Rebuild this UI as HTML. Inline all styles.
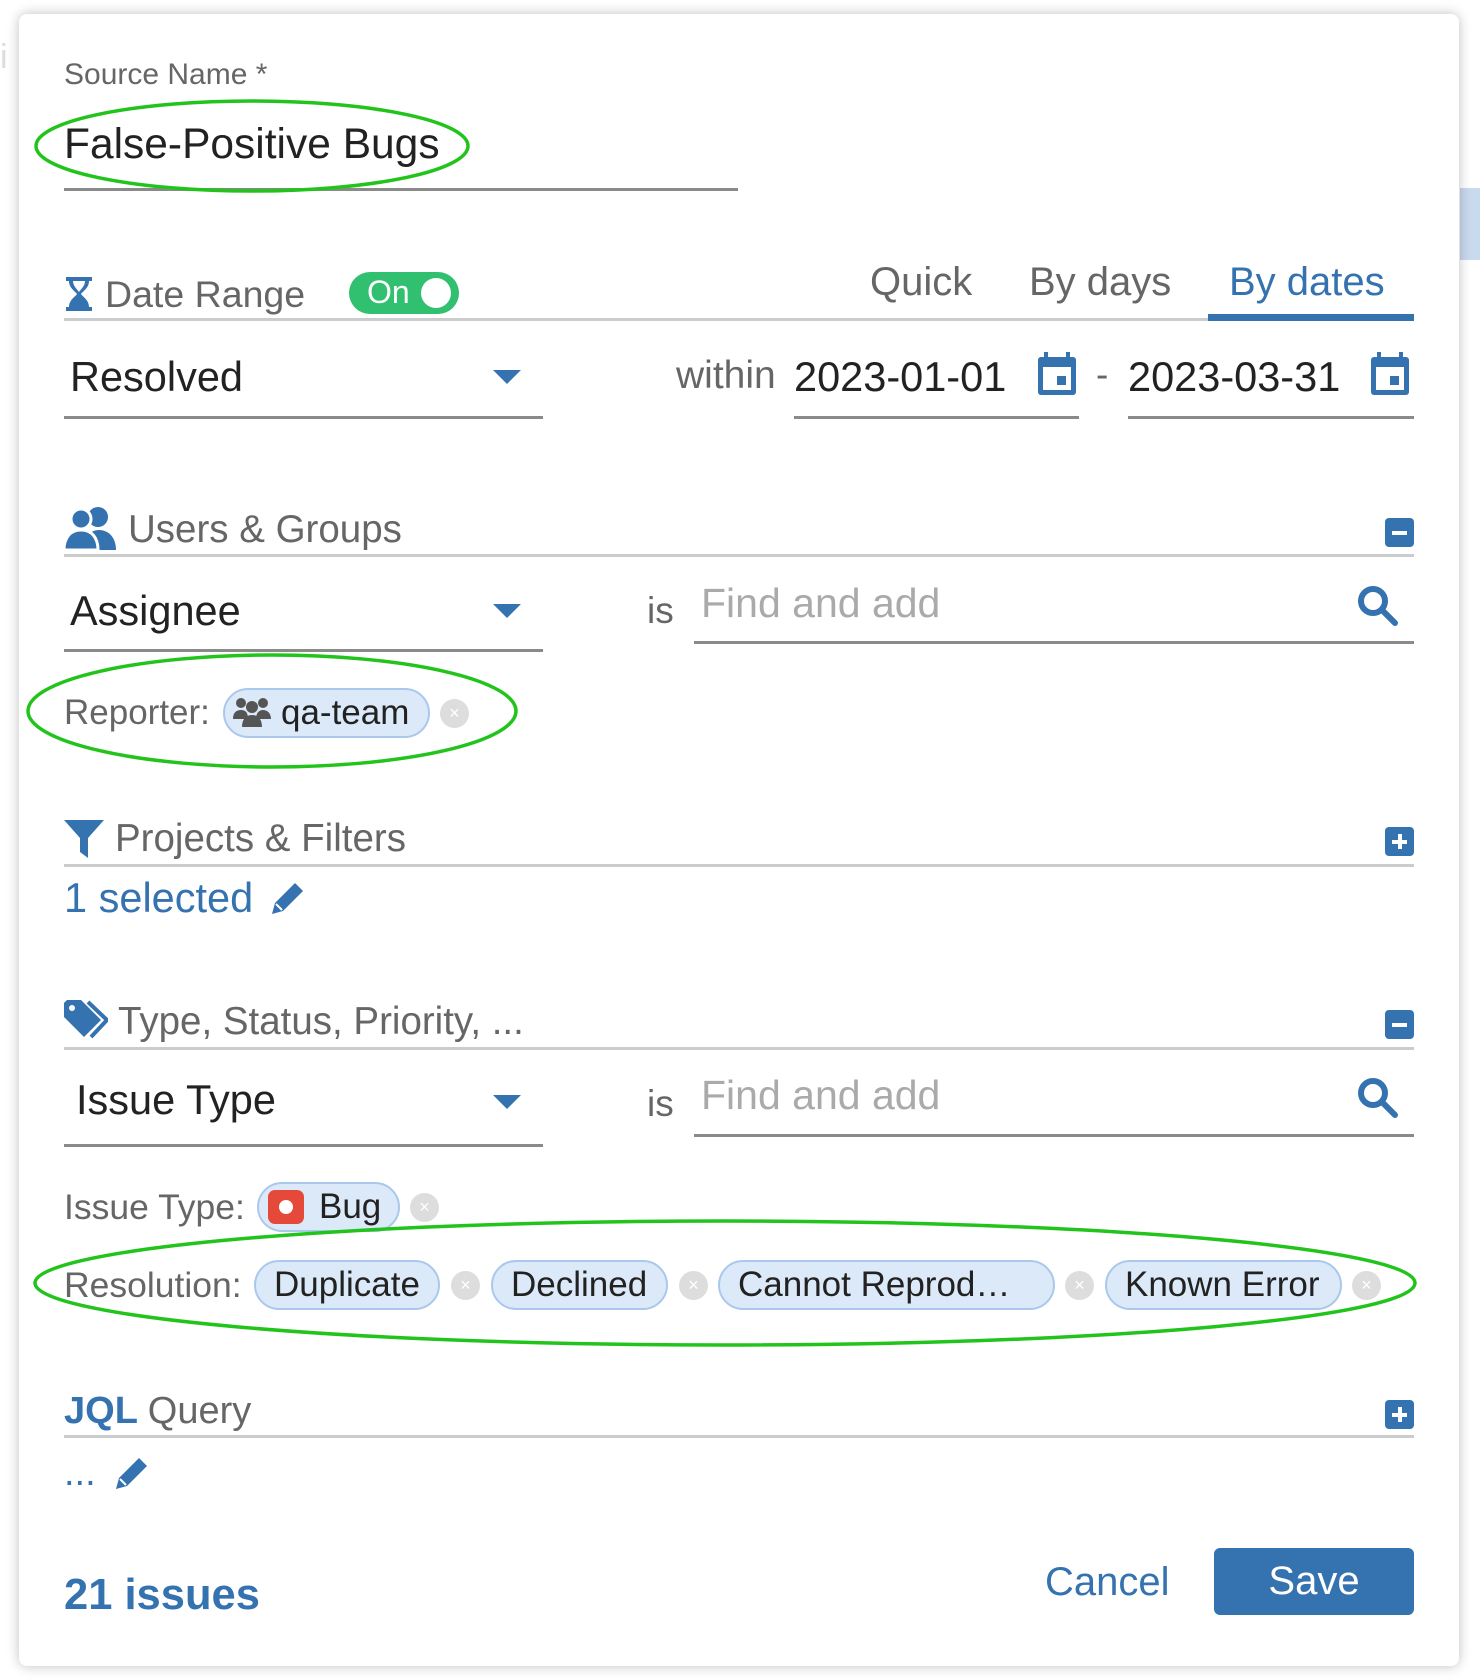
<!DOCTYPE html>
<html><head><meta charset="utf-8"><style>
*{margin:0;padding:0;box-sizing:border-box}
body{width:1480px;height:1680px;background:#fff;position:relative;overflow:hidden;font-family:"Liberation Sans",Arial,sans-serif;}
.dlg{position:absolute;left:19px;top:14px;width:1440px;height:1652px;background:#fff;border-radius:8px;box-shadow:0 0 12px rgba(0,0,0,.25)}
.a{position:absolute;white-space:nowrap;line-height:1}
.lbl{color:#666}
.blue{color:#3572b0}
.hl{position:absolute;height:3px;background:#ccc}
.ul{position:absolute;height:3px;background:#8a8a8a}
.btn{position:absolute;width:29px;height:29px;background:#3572b0;border-radius:4px}
.btn:before{content:"";position:absolute;left:7px;top:13px;width:15px;height:4px;background:#fff}
.plus:after{content:"";position:absolute;left:13px;top:7px;width:4px;height:15px;background:#fff}
.chip{position:absolute;height:50px;border:2px solid #a9c8ec;background:#dce9f8;border-radius:25px;font-size:35px;color:#222;line-height:46px;padding:0 18px;white-space:nowrap;overflow:hidden}
.x{position:absolute;width:29px;height:29px;border-radius:50%;background:#ddd;color:#fff;font-size:18px;text-align:center;line-height:29px}
.caret{position:absolute;width:0;height:0;border-left:14px solid transparent;border-right:14px solid transparent;border-top:14px solid #3572b0}
</style></head><body>
<div class="a" style="left:0;top:40px;font-size:34px;color:#ddd">i</div>
<div style="position:absolute;left:1460px;top:188px;width:20px;height:72px;background:#c9d9ee"></div>
<div class="dlg"></div>

<div class="a lbl" style="left:64px;top:60px;font-size:30px">Source Name *</div>
<div class="a" style="left:64px;top:124px;font-size:42.5px;color:#222">False-Positive Bugs</div>
<div class="ul" style="left:64px;top:188px;width:674px"></div>

<svg class="a" style="left:64px;top:275px" width="30" height="38" viewBox="0 0 30 38"><path d="M2 2h26v4h-3c0 7-6 10-8 13 2 3 8 6 8 13h3v4H2v-4h3c0-7 6-10 8-13-2-3-8-6-8-13H2z" fill="#3572b0"/><path d="M9 6h12c0 5-4 8-6 11-2-3-6-6-6-11z" fill="#fff"/></svg>
<div class="a lbl" style="left:105px;top:276px;font-size:37.5px">Date Range</div>
<div style="position:absolute;left:349px;top:272px;width:110px;height:42px;border-radius:21px;background:#30c06f"></div>
<div class="a" style="left:367px;top:276px;font-size:32px;color:#fff">On</div>
<div style="position:absolute;left:421px;top:278px;width:30px;height:30px;border-radius:50%;background:#fff"></div>
<div class="a lbl" style="left:870px;top:262px;font-size:40px">Quick</div>
<div class="a lbl" style="left:1029px;top:262px;font-size:40px">By days</div>
<div class="a blue" style="left:1229px;top:262px;font-size:40px">By dates</div>
<div class="hl" style="left:64px;top:318px;width:1350px"></div>
<div style="position:absolute;left:1208px;top:314px;width:206px;height:7px;background:#3572b0"></div>

<div class="a" style="left:70px;top:356px;font-size:41.5px;color:#222">Resolved</div>
<div class="caret" style="left:493px;top:370px"></div>
<div class="ul" style="left:64px;top:416px;width:479px"></div>
<div class="a lbl" style="left:676px;top:356px;font-size:39px">within</div>
<div class="a" style="left:794px;top:356px;font-size:41.5px;color:#222">2023-01-01</div>
<svg class="a" style="left:1036px;top:351px" width="42" height="46" viewBox="0 0 42 46"><rect x="2" y="6" width="38" height="38" rx="3" fill="#3572b0"/><rect x="7" y="16" width="28" height="23" fill="#fff"/><rect x="21" y="25" width="9" height="9" fill="#3572b0"/><rect x="8" y="1" width="4" height="8" fill="#3572b0"/><rect x="30" y="1" width="4" height="8" fill="#3572b0"/></svg>
<div class="ul" style="left:794px;top:416px;width:285px"></div>
<div class="a lbl" style="left:1096px;top:356px;font-size:37px">-</div>
<div class="a" style="left:1128px;top:356px;font-size:41.5px;color:#222">2023-03-31</div>
<svg class="a" style="left:1369px;top:351px" width="42" height="46" viewBox="0 0 42 46"><rect x="2" y="6" width="38" height="38" rx="3" fill="#3572b0"/><rect x="7" y="16" width="28" height="23" fill="#fff"/><rect x="21" y="25" width="9" height="9" fill="#3572b0"/><rect x="8" y="1" width="4" height="8" fill="#3572b0"/><rect x="30" y="1" width="4" height="8" fill="#3572b0"/></svg>
<div class="ul" style="left:1128px;top:416px;width:286px"></div>

<svg class="a" style="left:64px;top:506px" width="54" height="44" viewBox="0 0 54 44"><circle cx="34" cy="11" r="10" fill="#3572b0"/><path d="M20 44c0-12 5-20 15-20s17 8 17 20z" fill="#3572b0"/><circle cx="17" cy="13" r="10" fill="#3572b0" stroke="#fff" stroke-width="3"/><path d="M0 44c0-12 6-20 17-20s17 8 17 20z" fill="#3572b0" stroke="#fff" stroke-width="3"/></svg>
<div class="a lbl" style="left:128px;top:511px;font-size:38.5px">Users &amp; Groups</div>
<div class="hl" style="left:64px;top:554px;width:1350px"></div>
<div class="btn" style="left:1385px;top:518px"></div>

<div class="a" style="left:70px;top:590px;font-size:41.5px;color:#222">Assignee</div>
<div class="caret" style="left:493px;top:604px"></div>
<div class="ul" style="left:64px;top:649px;width:479px"></div>
<div class="a lbl" style="left:647px;top:592px;font-size:37px">is</div>
<div class="a" style="left:701px;top:583px;font-size:41px;color:#aaa">Find and add</div>
<svg class="a" style="left:1356px;top:584px" width="44" height="44" viewBox="0 0 44 44"><circle cx="17" cy="17" r="12" fill="none" stroke="#3572b0" stroke-width="6"/><path d="M26 26l13 13" stroke="#3572b0" stroke-width="6" stroke-linecap="round"/></svg>
<div class="ul" style="left:694px;top:641px;width:720px"></div>

<div class="a lbl" style="left:64px;top:695px;font-size:35px">Reporter:</div>
<div class="chip" style="left:223px;top:688px;width:207px;padding-left:56px;padding-right:4px">qa-team</div>
<svg class="a" style="left:233px;top:697px" width="38" height="30" viewBox="0 0 38 30"><circle cx="8" cy="6" r="5" fill="#555"/><circle cx="30" cy="6" r="5" fill="#555"/><circle cx="19" cy="10" r="6" fill="#555"/><path d="M0 22c0-6 3-9 8-9s7 3 7 9zM23 22c0-6 3-9 7-9s8 3 8 9zM9 30c0-8 4-12 10-12s10 4 10 12z" fill="#555"/></svg>
<div class="x" style="left:440px;top:699px">×</div>

<svg class="a" style="left:64px;top:820px" width="40" height="38" viewBox="0 0 40 38"><path d="M0 0h40L24 18v20l-8-6V18z" fill="#3572b0"/></svg>
<div class="a lbl" style="left:115px;top:820px;font-size:38.5px">Projects &amp; Filters</div>
<div class="hl" style="left:64px;top:864px;width:1350px"></div>
<div class="btn plus" style="left:1385px;top:827px"></div>
<div class="a blue" style="left:64px;top:877px;font-size:41.5px">1 selected</div>
<svg class="a" style="left:270px;top:880px" width="36" height="36" viewBox="0 0 36 36"><path d="M2 34l3-11L25 3l8 8-20 20z" fill="#3572b0"/><path d="M6 24l6 6" stroke="#fff" stroke-width="2"/></svg>

<svg class="a" style="left:64px;top:1000px" width="44" height="40" viewBox="0 0 44 40"><path d="M0 3v14l20 20 17-17L17 0H3z" fill="#3572b0"/><circle cx="8" cy="8" r="3" fill="#fff"/><path d="M24 2l19 18-16 17" fill="none" stroke="#3572b0" stroke-width="4"/></svg>
<div class="a lbl" style="left:118px;top:1003px;font-size:38.5px">Type, Status, Priority, ...</div>
<div class="hl" style="left:64px;top:1047px;width:1350px"></div>
<div class="btn" style="left:1385px;top:1010px"></div>

<div class="a" style="left:76px;top:1079px;font-size:41.5px;color:#222">Issue Type</div>
<div class="caret" style="left:493px;top:1095px"></div>
<div class="ul" style="left:64px;top:1144px;width:479px"></div>
<div class="a lbl" style="left:647px;top:1085px;font-size:37px">is</div>
<div class="a" style="left:701px;top:1075px;font-size:41px;color:#aaa">Find and add</div>
<svg class="a" style="left:1356px;top:1076px" width="44" height="44" viewBox="0 0 44 44"><circle cx="17" cy="17" r="12" fill="none" stroke="#3572b0" stroke-width="6"/><path d="M26 26l13 13" stroke="#3572b0" stroke-width="6" stroke-linecap="round"/></svg>
<div class="ul" style="left:694px;top:1134px;width:720px"></div>

<div class="a lbl" style="left:64px;top:1190px;font-size:35.5px">Issue Type:</div>
<div class="chip" style="left:257px;top:1182px;width:143px;padding-left:60px">Bug</div>
<div style="position:absolute;left:268px;top:1190px;width:36px;height:34px;border-radius:7px;background:#e5493a"></div>
<div style="position:absolute;left:279px;top:1200px;width:14px;height:14px;border-radius:50%;background:#fff"></div>
<div class="x" style="left:410px;top:1193px">×</div>

<div class="a lbl" style="left:64px;top:1268px;font-size:35.5px">Resolution:</div>
<div class="chip" style="left:254px;top:1260px;width:186px">Duplicate</div>
<div class="x" style="left:451px;top:1271px">×</div>
<div class="chip" style="left:491px;top:1260px;width:177px">Declined</div>
<div class="x" style="left:679px;top:1271px">×</div>
<div class="chip" style="left:718px;top:1260px;width:337px">Cannot Reprod…</div>
<div class="x" style="left:1065px;top:1271px">×</div>
<div class="chip" style="left:1105px;top:1260px;width:237px">Known Error</div>
<div class="x" style="left:1352px;top:1271px">×</div>

<div class="a" style="left:64px;top:1392px;font-size:38px;color:#3572b0;font-weight:bold">JQL <span style="font-weight:normal;color:#666">Query</span></div>
<div class="hl" style="left:64px;top:1435px;width:1350px"></div>
<div class="btn plus" style="left:1385px;top:1400px"></div>
<div class="a blue" style="left:64px;top:1454px;font-size:38px">...</div>
<svg class="a" style="left:114px;top:1455px" width="36" height="36" viewBox="0 0 36 36"><path d="M2 34l3-11L25 3l8 8-20 20z" fill="#3572b0"/><path d="M6 24l6 6" stroke="#fff" stroke-width="2"/></svg>

<div class="a" style="left:64px;top:1574px;font-size:43.5px;color:#3572b0;font-weight:bold">21 issues</div>
<div class="a blue" style="left:1045px;top:1562px;font-size:40px">Cancel</div>
<div style="position:absolute;left:1214px;top:1548px;width:200px;height:67px;background:#3572b0;border-radius:6px;color:#fff;font-size:40px;text-align:center;line-height:67px">Save</div>

<svg style="position:absolute;left:0;top:0" width="1480" height="1680"><g fill="none" stroke="#22c41c" stroke-width="3.5"><ellipse cx="252" cy="146" rx="216" ry="45"/><ellipse cx="272" cy="711" rx="244" ry="56"/><ellipse cx="725" cy="1283" rx="690" ry="62"/></g></svg>
</body></html>
